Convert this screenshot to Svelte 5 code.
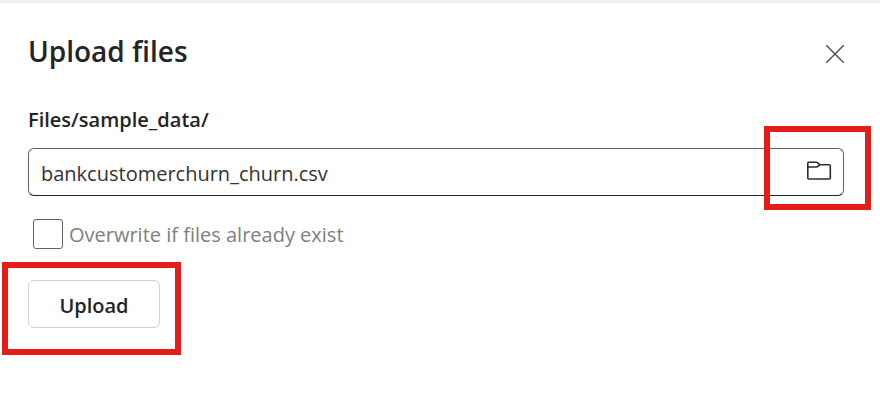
<script>
  let fileName = $state('bankcustomerchurn_churn.csv');
  let overwrite = $state(false);
</script>

<main class="panel">
  <header>
    <h1>Upload files</h1>
    <button class="close" type="button" aria-label="Close">
      <svg width="18" height="18" viewBox="0 0 18 18" fill="none" stroke="#555" stroke-width="1.5">
        <path d="M0 0 18 18M18 0 0 18" />
      </svg>
    </button>
  </header>

  <form onsubmit={(event) => event.preventDefault()}>
    <label class="path" for="file-name">Files/sample_data/</label>
    <div class="field">
      <input id="file-name" type="text" bind:value={fileName} />
      <div class="marked">
        <button class="browse" type="button" aria-label="Browse files">
          <svg width="26" height="20" viewBox="0 0 26 20" fill="none" stroke="#2c2c2c" stroke-width="1.6" stroke-linejoin="round">
            <path d="M1.8 2.200Q1.800 1.200 2.800 1.200H10Q11.300 1.200 12.200 2.200L13.600 3.800H23.300Q24.300 3.800 24.300 4.800V17Q24.300 18 23.300 18H2.800Q1.800 18 1.800 17Z" />
            <path d="M1.800 6H10.200Q11.500 6 12.400 5L13.600 3.800" />
          </svg>
        </button>
        <span class="mark mark-browse"></span>
      </div>
    </div>

    <div class="option">
      <input id="overwrite" type="checkbox" bind:checked={overwrite} />
      <label for="overwrite">Overwrite if files already exist</label>
    </div>

    <div class="marked actions">
      <button class="upload" type="submit">Upload</button>
      <span class="mark mark-upload"></span>
    </div>
  </form>
</main>

<style>
  :global(body) {
    background: #fff;
  }
  .panel {
    box-sizing: border-box;
    border-top: 3px solid #efefef;
    padding: 28px 36px 48px 28px;
    color: #242424;
    font-family: "Segoe UI", "Open Sans", "Noto Sans", sans-serif;
    font-size: 20px;
    line-height: 28px;
  }
  header {
    display: flex;
    align-items: center;
    justify-content: space-between;
  }
  h1 {
    margin: 0;
    font-size: 28px;
    font-weight: 600;
    line-height: 40px;
  }
  button {
    padding: 0;
    border: 0;
    background: none;
    color: inherit;
    font: inherit;
    cursor: pointer;
  }
  svg {
    display: block;
  }
  .close {
    margin-top: 6px;
  }
  .path {
    display: block;
    margin-top: 35px;
    font-weight: 600;
  }
  .field {
    display: flex;
    box-sizing: border-box;
    height: 48px;
    margin-top: 14px;
    border: 1px solid #616161;
    border-bottom-color: #242424;
    border-radius: 6px;
  }
  .field input {
    flex: 1;
    min-width: 0;
    padding: 4px 12px 0;
    border: 0;
    outline: 0;
    background: none;
    color: #333;
    font: inherit;
  }
  .marked {
    position: relative;
    display: flex;
  }
  .browse {
    display: flex;
    align-items: center;
    justify-content: center;
    width: 48px;
    padding-bottom: 2px;
  }
  .mark {
    position: absolute;
    box-sizing: border-box;
    border: 6px solid #e81b1b;
    pointer-events: none;
  }
  .mark-browse {
    inset: -23px -28px -15px -31px;
  }
  .option {
    display: flex;
    align-items: center;
    gap: 6px;
    margin: 23px 0 0 5px;
    color: #808080;
  }
  .option label {
    padding-top: 2px;
  }
  .option input {
    appearance: none;
    box-sizing: border-box;
    width: 30px;
    height: 30px;
    margin: 0;
    border: 1px solid #616161;
    border-radius: 3px;
  }
  .option input:checked {
    background: #616161;
  }
  .actions {
    width: fit-content;
    margin-top: 31px;
  }
  .upload {
    box-sizing: border-box;
    min-width: 132px;
    height: 48px;
    padding: 4px 24px 0;
    border: 1px solid #d1d1d1;
    border-radius: 6px;
    font-weight: 600;
  }
  .mark-upload {
    inset: -18px -21px -27px -26px;
  }
</style>
